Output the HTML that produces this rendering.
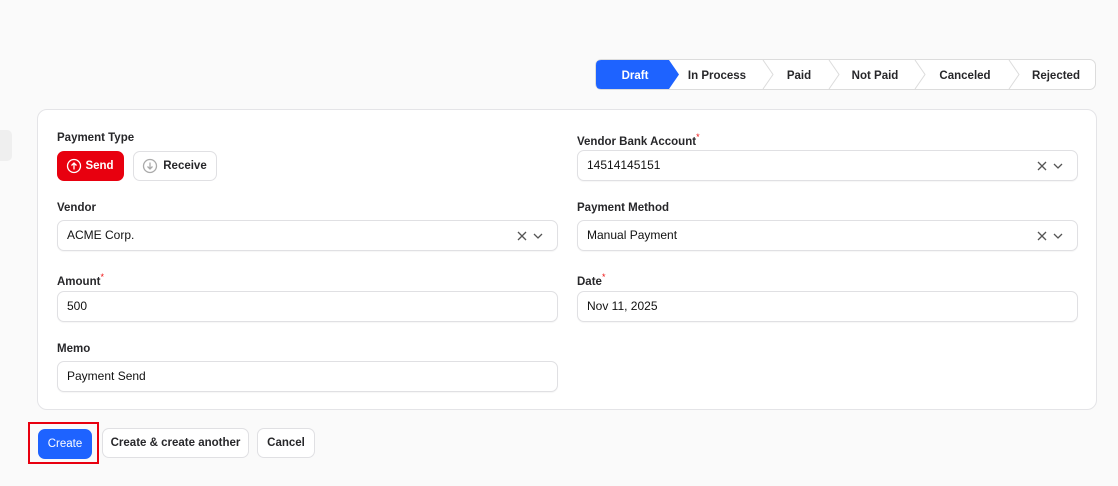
<!DOCTYPE html>
<html><head><style>
*{box-sizing:border-box;margin:0;padding:0}
body{width:1118px;height:486px;background:#fafafa;font-family:"Liberation Sans",sans-serif;position:relative;overflow:hidden;color:#111;font-size:12px}
.abs{position:absolute}
.card{left:37px;top:109px;width:1060px;height:301px;background:#fff;border:1px solid #e4e4e7;border-radius:10px}
.lbl{font-size:11.5px;font-weight:bold;color:#27272a;margin-top:2px}
.lbl sup{color:#e11;font-size:9px;font-weight:normal}
.inp{height:31px;background:#fff;border:1px solid #e0e0e3;border-radius:7px;font-size:12px;padding:0 9px;line-height:29px;box-shadow:0 1px 1px rgba(0,0,0,.04)}
.ic{position:absolute;right:9px;top:9px}
.btn{height:30px;border-radius:7px;font-size:11.5px;font-weight:bold;line-height:29px;text-align:center;border:1px solid #e0e0e3;background:#fff;color:#27272a}
</style></head><body>
<div class="abs" style="left:0;top:130px;width:12px;height:31px;background:#efefef;border-radius:0 5px 5px 0"></div>

<svg class="abs" style="left:595px;top:59px" width="502" height="32">
<rect x="0.5" y="0.5" width="500" height="30" rx="6" fill="#fff" stroke="#dcdcdc"/>
<path d="M6 1 H74 L84 15.5 L74 30 H6 Q1 30 1 25 V6 Q1 1 6 1Z" fill="#1e63ff"/>
<g fill="none" stroke="#dcdcdc"><path d="M168 1 L178 15.5 L168 30"/><path d="M234 1 L244 15.5 L234 30"/><path d="M320 1 L330 15.5 L320 30"/><path d="M414 1 L424 15.5 L414 30"/></g>
<g font-family="Liberation Sans" font-size="11.5" font-weight="bold" text-anchor="middle" fill="#27272a">
<text x="40" y="20" fill="#fff">Draft</text><text x="122" y="20">In Process</text><text x="204" y="20">Paid</text><text x="280" y="20">Not Paid</text><text x="370" y="20">Canceled</text><text x="461" y="20">Rejected</text></g>
</svg>

<div class="abs card"></div>
<div class="abs lbl" style="left:57px;top:130px">Payment Type</div>
<div class="abs btn" style="left:57px;top:151px;width:67px;background:#e8000f;border-color:#e8000f;color:#fff;padding-left:18px">Send</div>
<svg class="abs" style="left:66px;top:158px" width="16" height="16"><circle cx="8" cy="8" r="6.5" fill="none" stroke="#fff" stroke-width="1.3"/><path d="M8 11.5V5M5.5 7.5L8 5L10.5 7.5" fill="none" stroke="#fff" stroke-width="1.3"/></svg>
<div class="abs btn" style="left:133px;top:151px;width:84px;padding-left:20px">Receive</div>
<svg class="abs" style="left:142px;top:158px" width="16" height="16"><circle cx="8" cy="8" r="6.5" fill="none" stroke="#aaa" stroke-width="1.3"/><path d="M8 4.5V11M5.5 8.5L8 11L10.5 8.5" fill="none" stroke="#aaa" stroke-width="1.3"/></svg>

<div class="abs lbl" style="left:577px;top:130px">Vendor Bank Account<sup>*</sup></div>
<div class="abs inp" style="left:577px;top:150px;width:501px">14514145151<svg class="ic" width="32" height="12"><path d="M2 2L10 10M10 2L2 10M18 4L22 8L26 4" fill="none" stroke="#555" stroke-width="1.3"/></svg></div>

<div class="abs lbl" style="left:57px;top:200px">Vendor</div>
<div class="abs inp" style="left:57px;top:220px;width:501px">ACME Corp.<svg class="ic" width="32" height="12"><path d="M2 2L10 10M10 2L2 10M18 4L22 8L26 4" fill="none" stroke="#555" stroke-width="1.3"/></svg></div>
<div class="abs lbl" style="left:577px;top:200px">Payment Method</div>
<div class="abs inp" style="left:577px;top:220px;width:501px">Manual Payment<svg class="ic" width="32" height="12"><path d="M2 2L10 10M10 2L2 10M18 4L22 8L26 4" fill="none" stroke="#555" stroke-width="1.3"/></svg></div>

<div class="abs lbl" style="left:57px;top:270px">Amount<sup>*</sup></div>
<div class="abs inp" style="left:57px;top:291px;width:501px">500</div>
<div class="abs lbl" style="left:577px;top:270px">Date<sup>*</sup></div>
<div class="abs inp" style="left:577px;top:291px;width:501px">Nov 11, 2025</div>

<div class="abs lbl" style="left:57px;top:341px">Memo</div>
<div class="abs inp" style="left:57px;top:361px;width:501px">Payment Send</div>

<div class="abs" style="left:28px;top:422px;width:71px;height:42px;border:2px solid #e8000f"></div>
<div class="abs btn" style="left:38px;top:429px;width:54px;background:#1e63ff;border-color:#1e63ff;color:#fff;font-weight:normal">Create</div>
<div class="abs btn" style="left:102px;top:428px;width:147px">Create &amp; create another</div>
<div class="abs btn" style="left:257px;top:428px;width:58px">Cancel</div>
</body></html>
